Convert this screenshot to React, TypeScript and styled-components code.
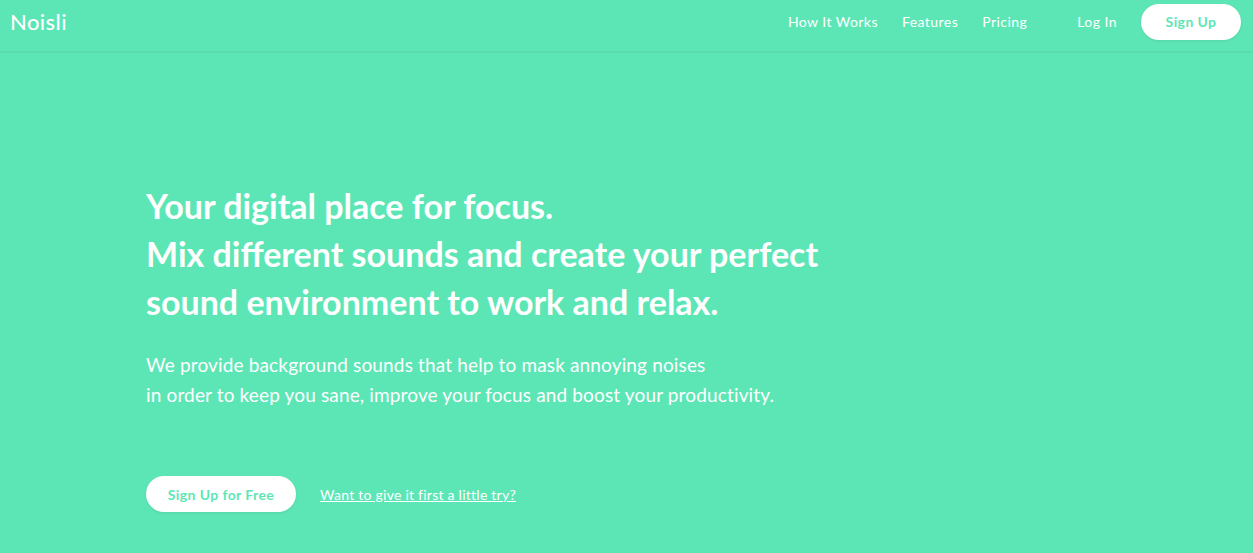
import React from "react";
import styled, { createGlobalStyle } from "styled-components";

const GREEN = "#5de6b5";

const Global = createGlobalStyle`
  html, body { margin: 0; padding: 0; }
  body {
    background: ${GREEN};
    font-family: "Lato", "Open Sans", sans-serif;
    color: #fff;
    -webkit-font-smoothing: antialiased;
  }
`;

const Page = styled.div`
  min-height: 553px;
  background: ${GREEN};
`;

const Header = styled.header`
  height: 52px;
  display: flex;
  align-items: center;
  justify-content: space-between;
  padding: 0 12px 0 10px;
  border-bottom: 1px solid rgba(0, 0, 0, 0.04);
  box-shadow: 0 1px 1px rgba(0, 0, 0, 0.03);
  box-sizing: border-box;
`;

const Logo = styled.a`
  font-size: 22px;
  font-weight: 500;
  color: #fff;
  text-decoration: none;
  letter-spacing: 0.4px;
  margin-top: -8px;
`;

const Nav = styled.nav`
  display: flex;
  align-items: center;
  margin-top: -8px;
`;

const NavLink = styled.a<{ $gap?: number }>`
  font-size: 14px;
  letter-spacing: 0.45px;
  color: #fff;
  text-decoration: none;
  margin-left: ${(p) => p.$gap ?? 24}px;
`;

const PillButton = styled.a<{ $w: number }>`
  display: inline-flex;
  align-items: center;
  justify-content: center;
  width: ${(p) => p.$w}px;
  height: 36px;
  border-radius: 18px;
  background: #fff;
  color: ${GREEN};
  font-size: 14px;
  letter-spacing: 0.4px;
  font-weight: 700;
  text-decoration: none;
  box-shadow: 0 1px 3px rgba(0, 0, 0, 0.08);
  box-sizing: border-box;
`;

const Hero = styled.section`
  padding: 130px 0 0 146px;
`;

const Title = styled.h1`
  margin: 0;
  font-size: 34px;
  line-height: 48px;
  font-weight: 700;
`;

const Lead = styled.p`
  margin: 24px 0 0;
  font-size: 19px;
  line-height: 30px;
  letter-spacing: 0.15px;
  font-weight: 400;
`;

const Actions = styled.div`
  display: flex;
  align-items: center;
  gap: 24px;
  margin-top: 66px;
`;

const TryLink = styled.a`
  font-size: 14px;
  letter-spacing: 0.25px;
  color: #fff;
  text-decoration: underline;
`;

export default function App() {
  return (
    <Page>
      <Global />
      <Header>
        <Logo href="#">Noisli</Logo>
        <Nav>
          <NavLink href="#" $gap={0}>How It Works</NavLink>
          <NavLink href="#">Features</NavLink>
          <NavLink href="#">Pricing</NavLink>
          <NavLink href="#" $gap={50}>Log In</NavLink>
          <NavLink as="span" $gap={24}>
            <PillButton $w={100} href="#">Sign Up</PillButton>
          </NavLink>
        </Nav>
      </Header>
      <Hero>
        <Title>
          Your digital place for focus.
          <br />
          Mix different sounds and create your perfect
          <br />
          sound environment to work and relax.
        </Title>
        <Lead>
          We provide background sounds that help to mask annoying noises
          <br />
          in order to keep you sane, improve your focus and boost your productivity.
        </Lead>
        <Actions>
          <PillButton $w={150} href="#">Sign Up for Free</PillButton>
          <TryLink href="#">Want to give it first a little try?</TryLink>
        </Actions>
      </Hero>
    </Page>
  );
}
